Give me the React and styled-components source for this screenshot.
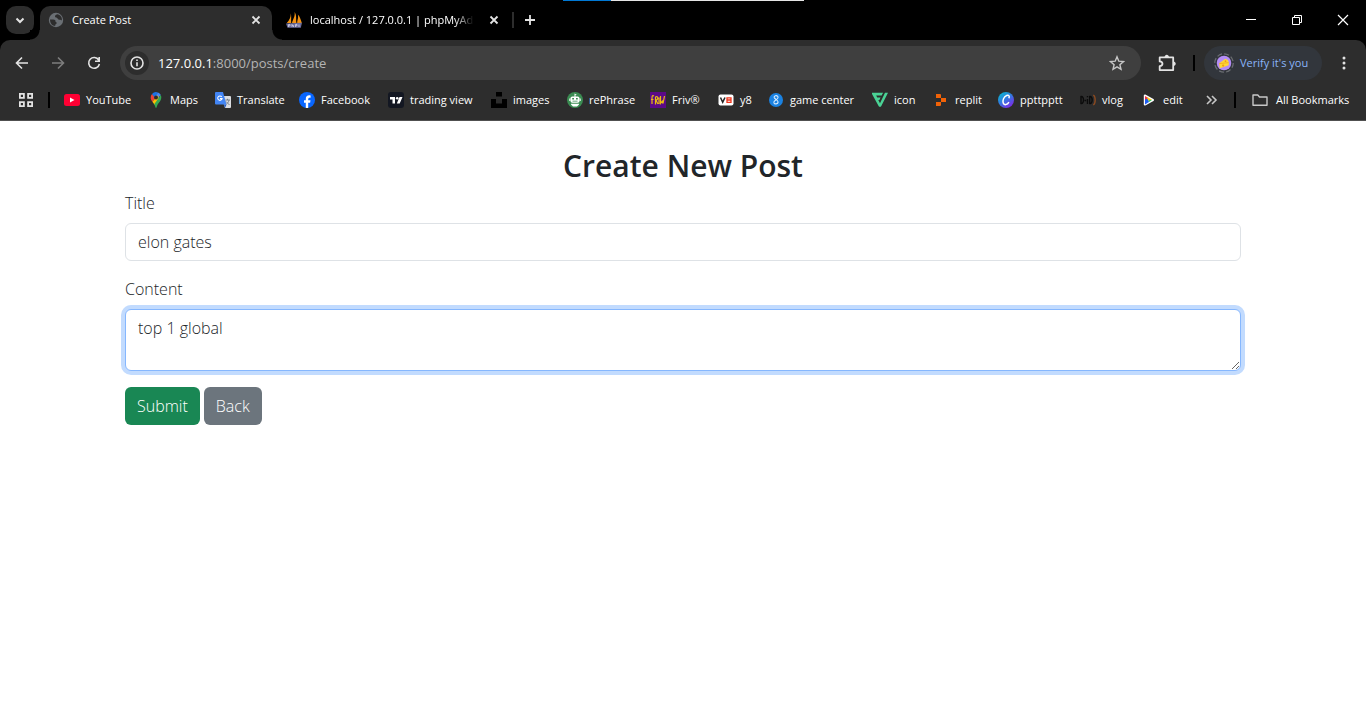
import React from "react";
import styled, { createGlobalStyle } from "styled-components";

const GlobalStyle = createGlobalStyle`
  *, *::before, *::after { box-sizing: border-box; }
  body {
    margin: 0;
    background: #fff;
    color: #212529;
    font: 300 16px/24px "Open Sans", "Noto Sans", sans-serif;
  }
  button, input, textarea { font: inherit; }
`;

/* ---------- browser window ---------- */

const Header = styled.header`
  position: relative;
  background: #000;
  color: #fff;
  font-size: 11px;
  line-height: 16px;
  font-weight: 400;
`;

const LoadingBar = styled.div`
  position: absolute;
  top: 0;
  left: 563px;
  width: 241px;
  height: 1px;
  background: linear-gradient(90deg, #0078d4 48px, #e5e5e5 48px);
`;

const TabStrip = styled.div`
  display: flex;
  align-items: center;
  height: 40px;
  padding-left: 6px;
`;

const PlainButton = styled.button`
  display: flex;
  align-items: center;
  justify-content: center;
  flex: none;
  padding: 0;
  border: 0;
  background: none;
  color: ${(p) => p.$color || "#e3e3e3"};
  width: ${(p) => p.$width || 24}px;
  height: ${(p) => p.$height || 24}px;
`;

const TabSearch = styled(PlainButton)`
  border-radius: 10px;
  background: #2d2d2d;
`;

const Tab = styled.div`
  position: relative;
  display: flex;
  align-items: center;
  align-self: flex-end;
  gap: 8px;
  height: 34px;
  width: ${(p) => p.$width}px;
  margin-left: ${(p) => (p.$active ? 6 : 0)}px;
  padding: 0 4px 6px ${(p) => (p.$active ? 8 : 14)}px;
  border-radius: 10px 10px 0 0;
  background: ${(p) => (p.$active ? "#2d2d2d" : "none")};

  &::before, &::after {
    content: "";
    display: ${(p) => (p.$active ? "block" : "none")};
    position: absolute;
    bottom: 0;
    width: 10px;
    height: 10px;
  }
  &::before {
    left: -10px;
    background: radial-gradient(circle at 0 0, #000 9px, #2d2d2d 10px);
  }
  &::after {
    right: -10px;
    background: radial-gradient(circle at 100% 0, #000 9px, #2d2d2d 10px);
  }
`;

const TabTitle = styled.span`
  flex: 1;
  overflow: hidden;
  white-space: nowrap;
  mask-image: ${(p) => (p.$fade ? "linear-gradient(90deg, #000 88%, transparent)" : "none")};
`;

const TabDivider = styled.span`
  width: 2px;
  height: 16px;
  margin: 0 4px 0 2px;
  background: #2d2d2d;
`;

const WindowControls = styled.div`
  display: flex;
  margin-left: auto;
`;

const Panel = styled.div`
  background: #2d2d2d;
  border-radius: 10px 10px 0 0;
  border-bottom: 1px solid #505050;
`;

const Toolbar = styled.div`
  display: flex;
  align-items: center;
  padding: 6px 10px 0;
`;

const NavButtons = styled.div`
  display: flex;
  gap: 12px;
  margin-right: 14px;
`;

const AddressBar = styled.form`
  display: flex;
  align-items: center;
  flex: 1;
  height: 34px;
  padding: 0 12px 0 5px;
  border-radius: 17px;
  background: #3f3f3f;
  font-size: 13px;
`;

const SiteInfo = styled(PlainButton)`
  border-radius: 12px;
  background: #2d2d2d;
  margin-right: 9px;
`;

const AddressInput = styled.input`
  flex: 1;
  min-width: 0;
  padding: 0;
  border: 0;
  outline: 0;
  background: none;
  color: #b4b4b4;
`;

const ProfileButton = styled.button`
  display: flex;
  align-items: center;
  gap: 6px;
  height: 34px;
  width: 118px;
  margin: 0 10px 0 9px;
  padding: 0 0 0 10px;
  border: 0;
  border-radius: 17px;
  background: #32363c;
  color: #8ab4f8;
  white-space: nowrap;
`;

const Divider = styled.span`
  flex: none;
  width: 2px;
  height: 16px;
  background: #000;
`;

const BookmarkBar = styled.nav`
  display: flex;
  align-items: center;
  height: 40px;
  padding: 0 14px;
`;

const AppsButton = styled(PlainButton)`
  margin-right: 10px;
`;

const BookmarkList = styled.div`
  display: flex;
  flex: 1;
  min-width: 0;
  overflow: hidden;
  padding-left: 14px;
`;

const Bookmark = styled.a`
  display: flex;
  align-items: center;
  flex: none;
  gap: 6px;
  width: ${(p) => p.$width}px;
  color: #fff;
  text-decoration: none;
  white-space: nowrap;
`;

const AllBookmarks = styled(Bookmark)`
  gap: 8px;
  margin-left: 16px;
`;

/* ---------- page ---------- */

const Container = styled.main`
  max-width: 1140px;
  margin: 0 auto;
  padding: 24px 12px;
`;

const Heading = styled.h1`
  margin: 0 0 4px;
  font-size: 30px;
  line-height: 42px;
  font-weight: 600;
  text-align: center;
`;

const Field = styled.div`
  margin-bottom: 16px;
`;

const Label = styled.label`
  display: block;
  margin-bottom: 8px;
`;

const TextInput = styled.input`
  display: block;
  width: 100%;
  height: 38px;
  padding: 6px 12px;
  border: 1px solid #dee2e6;
  border-radius: 6px;
  background: #fff;
  color: #212529;
  outline: 0;
`;

const TextArea = styled(TextInput)`
  height: 62px;
  resize: vertical;
  border-color: #86b7fe;
  box-shadow: 0 0 0 4px #c2dbfe;
`;

const Actions = styled.div`
  display: flex;
  gap: 4px;
`;

const Action = styled.button`
  height: 38px;
  padding: 6px 12px;
  border: 0;
  border-radius: 6px;
  background: ${(p) => p.$color};
  color: #fff;
  line-height: 26px;
  text-decoration: none;
`;

/* ---------- icons ---------- */

const Svg = styled.svg`
  flex: none;
`;

const Icon = ({ size = 16, children, ...rest }) => (
  <Svg width={size} height={size} viewBox="0 0 16 16" fill="none" stroke="currentColor" strokeWidth="1.6" aria-hidden="true" {...rest}>
    {children}
  </Svg>
);

const Chevron = () => <Icon><path d="M4.5 6.5 8 10l3.500-3.500" strokeWidth="2" /></Icon>;
const Close = () => <Icon><path d="m4.500 4.500 7 7m0-7-7 7" strokeWidth="1.800" /></Icon>;
const Plus = () => <Icon><path d="M8 3v10M3 8h10" strokeWidth="1.800" /></Icon>;
const Back = () => <Icon><path d="M14 8H3M8 2.500 2.500 8 8 13.500" /></Icon>;
const Forward = () => <Icon><path d="M2 8h11M8 2.500 13.500 8 8 13.500" /></Icon>;
const Reload = () => <Icon><path d="M12.700 5A5.400 5.400 0 1 0 13.400 9M13.200 2v4.300H9" /></Icon>;
const Info = () => <Icon><circle cx="8" cy="8" r="6" /><path d="M8 7.200v4M8 4.500v1.600" /></Icon>;
const Star = () => <Icon strokeWidth="1.400"><path d="m8 1.800 1.800 4.400 4.700.4-3.600 3.100 1.100 4.600L8 11.800l-4 2.500 1.100-4.600-3.600-3.100 4.700-.4z" /></Icon>;
const Puzzle = () => (
  <Icon size={18}>
    <path d="M1.500 3h12v11.300h-12v-3.500c3.300-.2 3.300-4 0-4.200z" strokeLinejoin="round" />
    <path d="M5.800 3c0-3 4-3 4 0zM13.500 6.600c3 0 3 4 0 4z" fill="currentColor" stroke="none" />
  </Icon>
);
const Dots = () => <Icon fill="currentColor" stroke="none"><circle cx="8" cy="3" r="1.500" /><circle cx="8" cy="8" r="1.500" /><circle cx="8" cy="13" r="1.500" /></Icon>;
const Apps = () => <Icon strokeWidth="1.800"><path d="M1.900 1.900h4v4h-4zM10.100 1.900h4v4h-4zM1.900 10.100h4v4h-4zM10.100 10.100h4v4h-4z" /></Icon>;
const More = () => <Icon><path d="m3 4 4 4-4 4M8 4l4 4-4 4" /></Icon>;
const Folder = () => <Icon stroke="#c7c7c7"><path d="M1 3h4.800l1.700 2H15v8.200H1z" strokeLinejoin="round" strokeWidth="1.400" /></Icon>;
const Minimize = () => <Icon><path d="M3 7.500h10" stroke="#fff" strokeWidth="1" /></Icon>;
const Restore = () => <Icon stroke="#fff" strokeWidth="1"><path d="M3.500 5.500h7v7h-7zM5.500 5.500v-2h7v7h-2" /></Icon>;
const WindowClose = () => <Icon stroke="#fff" strokeWidth="1.200"><path d="m3 3 10 10M13 3 3 13" /></Icon>;

const Globe = () => (
  <Icon stroke="none">
    <circle cx="8" cy="8" r="7.200" fill="#6a6f74" />
    <path d="M2 7.600h3.200c1.800 0 2.300.7 2.300 1.900 0 .8 1.300.6 1.300 1.400 0 1-1.600.8-1.600 2.300v.9C4.200 14 2.100 11.600 2 7.600zM9.200 2.300C7.600 2.800 7 3.600 7 4.600c0 1.300 2 .8 2.600 1.800.6 1.100 1.300 1.300 2.300 1.300.9 0 1.200.7 2 .5.300-2.900-1.600-5.500-4.700-5.900z" fill="#2d2d2d" />
  </Icon>
);
const PhpMyAdmin = () => (
  <Icon stroke="none">
    <path d="M4.600 1.300C5.200 5 3.500 8 .8 11h4.400C4.800 7.500 5.800 4.500 4.600 1.300zM8.500 0c1 4-1.500 7-2.500 11h4.500c-.8-3.500.5-8-2-11zM11.800 2.500c1 3.500-.8 5.500-.6 8.500h4.600c-.9-3-1.800-6.500-4-8.500z" fill="#f29111" />
    <path d="m0 11.400 16-.6-1.200 4.900H1.500z" fill="#6c6d9c" />
    <path d="M2.500 15v-2.500h1.500v1.300H2.500M6 12v3m0-1.500h1.500V15M9.500 15v-2.500H11v1.300H9.500M13 12.500V15" stroke="#cfcfe4" strokeWidth=".8" />
  </Icon>
);
const Cheese = () => (
  <Icon size={20} stroke="none">
    <circle cx="8" cy="8" r="7.400" stroke="#6a6d72" strokeDasharray="4 1.800" strokeWidth="1" />
    <circle cx="8" cy="8" r="5.800" fill="#b58cf5" />
    <path d="M4.200 8.200 8.800 4.800c1.800 0 3 1.200 3 3v2l-7.200 2.400z" fill="#fdd835" />
    <path d="m4.200 8.500 7.500-.8" stroke="#f4a91f" strokeWidth=".7" />
    <circle cx="7.300" cy="10" r=".9" fill="#ef9b16" /><circle cx="9.200" cy="6.500" r=".7" fill="#ef9b16" />
  </Icon>
);

const YouTube = () => <Icon stroke="none"><rect y="2" width="16" height="12" rx="2.500" fill="#ff0033" /><path d="M6 5.500v5L10.500 8z" fill="#fff" /></Icon>;
const Maps = () => (
  <Icon stroke="none">
    <path d="M2.700 5.700A5.300 5.300 0 0 1 4 2l4 3.300L4.400 9.800c-1-1.400-1.700-2.700-1.700-4.100z" fill="#ea4335" />
    <path d="M4 2a5.400 5.400 0 0 1 6-1.500L6.200 5z" fill="#1a73e8" />
    <path d="M10 .5a5.300 5.300 0 0 1 2.800 2.500L8 8.500 6 5z" fill="#4285f4" />
    <path d="M4.400 9.800 10 3l1 4-4.200 6z" fill="#fbbc04" />
    <path d="M12.800 3c1.200 3 0 5.300-1.500 7.200C9.800 12 9 13.500 8.500 15.500c-.2.600-.8.600-1 0-.4-1.500-.8-2.300-1.300-3.200z" fill="#34a853" />
    <circle cx="8" cy="5.500" r="2" fill="#2d2d2d" />
  </Icon>
);
const Translate = () => (
  <Icon stroke="none">
    <path d="M6 4h9a1 1 0 0 1 1 1v10a1 1 0 0 1-1 1H10z" fill="#dadce0" />
    <path d="M1 0h7l3.500 12.500H1a1 1 0 0 1-1-1V1a1 1 0 0 1 1-1z" fill="#4285f4" />
    <path d="M9 12.500h2.500L10 16z" fill="#1a56c4" />
    <path d="M6.700 4.800a2.200 2.200 0 1 0 .4 1.800H5" stroke="#fff" strokeWidth="1.100" />
    <path d="M10.500 8h4.500M12.500 6.800V8M14 8c-.3 2-1.500 3.300-2.500 4M11 9.500l3.500 3.500" stroke="#6f7985" strokeWidth=".9" />
  </Icon>
);
const Facebook = () => <Icon stroke="none"><circle cx="8" cy="8" r="8" fill="#0866ff" /><path d="M6.800 16v-5.300H5V8.200h1.800V7c0-2.600 1.200-3.700 3.500-3.700.5 0 1 .1 1.300.2v2.200h-.9c-1.100 0-1.500.5-1.500 1.600v.9h2.300l-.4 2.500H9.200V16z" fill="#fff" /></Icon>;
const TradingView = () => <Icon stroke="none"><rect width="16" height="16" rx="3" fill="#131722" /><path d="M2 5h5v6.500H4.500v-4H2zM11.500 5h3l-2.800 6.500H8.800z" fill="#fff" /><circle cx="9.200" cy="6.300" r="1.300" fill="#fff" /></Icon>;
const Unsplash = () => <Icon stroke="none"><path d="M5 0h6v4.500H5zM0 7h5v4.500h6V7h5v9H0z" fill="#000" /></Icon>;
const Robot = () => (
  <Icon stroke="none">
    <circle cx="8" cy="8" r="8" fill="#3b8c52" />
    <path d="M7.500 1.500 10 3H8.500v1.500h2.300A1.700 1.700 0 0 1 12.500 6v3a1.700 1.700 0 0 1-1.700 1.700H5.200A1.700 1.700 0 0 1 3.500 9V6a1.700 1.700 0 0 1 1.700-1.500h2.300zM2.300 6.500h.9v2.500h-.9zM12.800 6.500h.9v2.500h-.9zM4 11.700h8v.9l-2 2H6l-2-2z" fill="#fff" />
    <path d="M5.200 6h1.800v1.500H5.200zM9 6h1.800v1.500H9zM5.500 8.700h5v.8h-5z" fill="#3b8c52" />
  </Icon>
);
const Friv = () => <Icon stroke="none"><path d="M0 0h16v16H0z" fill="#5b0a87" /><path d="M4 4c-1.600-1-2 0-2 2v6M1 7.500h2.500M5.500 12.500V5c3-1.500 3 3 .3 3L8 12M9 5.500V12M10.500 4v7.500L12.300 9l.7 2.500L14.500 4" stroke="#e9bd12" strokeWidth="1.200" /></Icon>;
const Y8 = () => <Icon stroke="none"><rect x=".5" y="2.500" width="15" height="11" rx="2" fill="#fff" /><path d="m2.500 5.500 2.200 4.700 2.300-4.700" stroke="#222" strokeWidth="1.500" /><path d="M9 5.800h4v4.500H9zM9 8h4" stroke="#f0331b" strokeWidth="1.300" /></Icon>;
const GameCenter = () => <Icon stroke="none"><circle cx="8" cy="8" r="7" fill="#1a82e2" /><path d="M9.700 4.300C8.400 3 5.800 3.800 6.200 5.500c.4 1.500 4 2.600 3.900 4.600-.1 2-3.500 2.500-4.200.6-.6-2.200 3.900-3.200 4.100-4.900 0-.6 0-1-.3-1.500z" stroke="#d8ecff" strokeWidth="1.100" /></Icon>;
const Flaticon = () => <Icon stroke="none"><path d="M0 .8h11.200L9.800 3.500H4.200l1 1.900h3.500L7.500 8H6.300l1.700 3.200L13 .8h3L9.300 14a1.500 1.500 0 0 1-2.700 0L0 2z" fill="#4ad295" /><path d="m11.700.8-4 8" stroke="#2d2d2d" strokeWidth=".8" /></Icon>;
const Replit = () => <Icon stroke="none"><path d="M3 2h4a1 1 0 0 1 1 1v3H3zM8 6h5v4H8zM3 10h5v3a1 1 0 0 1-1 1H3z" fill="#f26207" /></Icon>;
const Canva = () => (
  <Icon stroke="none">
    <defs><linearGradient id="canva" x1="0" y1="0" x2=".7" y2="1"><stop stopColor="#00c4cc" /><stop offset=".5" stopColor="#2f7de0" /><stop offset="1" stopColor="#7d2ae8" /></linearGradient></defs>
    <circle cx="8" cy="8" r="8" fill="url(#canva)" />
    <path d="M10.700 6.300C12.200 4.300 10.700 2.700 8.700 3.500 5.700 4.700 4.400 8.600 5.200 11c.9 2.700 4.200 1.800 5.700-.9" stroke="#fff" strokeWidth="1.500" />
  </Icon>
);
const Vlog = () => <Icon strokeWidth="1.400"><path d="M1 4.500v7c3.300.5 3.300-7.500 0-7zM4.500 8.500h1.700M7.500 7v5M7.500 4v1.300M9.700 4.500v7c3.300.5 3.300-7.500 0-7z" stroke="#0b0b0b" /><path d="M13.300 3c2.500 1.500 2.500 8.500 0 10" stroke="#8c4a20" /></Icon>;
const Edit = () => (
  <Icon stroke="none">
    <path d="M3.800 3.500v9L12 8z" fill="#fff" stroke="#fff" strokeLinejoin="round" strokeWidth="2" />
    <path d="M4 4v5l3.500-3z" fill="#ef2f4b" /><path d="M4 7.500v5L8 10 7 6.500z" fill="#1e5df2" /><path d="M7 6.500 8 10l3-2z" fill="#24c35b" /><path d="m5.500 4.700 5.500 3.100-3.700.7z" fill="#ffca1c" />
  </Icon>
);

const bookmarks = [
  ["YouTube", YouTube, 84],
  ["Maps", Maps, 67],
  ["Translate", Translate, 84],
  ["Facebook", Facebook, 89],
  ["trading view", TradingView, 103],
  ["images", Unsplash, 76],
  ["rePhrase", Robot, 83],
  ["Friv®", Friv, 68],
  ["y8", Y8, 50],
  ["game center", GameCenter, 104],
  ["icon", Flaticon, 61],
  ["replit", Replit, 65],
  ["ppttpptt", Canva, 82],
  ["vlog", Vlog, 61],
  ["edit", Edit, 48],
];

function BrowserHeader() {
  return (
    <Header>
      <LoadingBar />
      <TabStrip>
        <TabSearch $width={28} $height={28} aria-label="Search tabs"><Chevron /></TabSearch>
        <Tab $active $width={232}>
          <Globe />
          <TabTitle>Create Post</TabTitle>
          <PlainButton aria-label="Close tab"><Close /></PlainButton>
        </Tab>
        <Tab $width={238}>
          <PhpMyAdmin />
          <TabTitle $fade>localhost / 127.0.0.1 | phpMyAd</TabTitle>
          <PlainButton aria-label="Close tab"><Close /></PlainButton>
        </Tab>
        <TabDivider />
        <PlainButton aria-label="New tab"><Plus /></PlainButton>
        <WindowControls>
          <PlainButton $width={46} $height={40} aria-label="Minimize"><Minimize /></PlainButton>
          <PlainButton $width={46} $height={40} aria-label="Restore"><Restore /></PlainButton>
          <PlainButton $width={46} $height={40} aria-label="Close window"><WindowClose /></PlainButton>
        </WindowControls>
      </TabStrip>
      <Panel>
        <Toolbar>
          <NavButtons>
            <PlainButton aria-label="Back"><Back /></PlainButton>
            <PlainButton $color="#7d7d7d" aria-label="Forward"><Forward /></PlainButton>
            <PlainButton aria-label="Reload"><Reload /></PlainButton>
          </NavButtons>
          <AddressBar onSubmit={(e) => e.preventDefault()}>
            <SiteInfo type="button" aria-label="Site information"><Info /></SiteInfo>
            <label htmlFor="address">127.0.0.1</label>
            <AddressInput id="address" defaultValue=":8000/posts/create" />
            <PlainButton type="button" $color="#c7c7c7" aria-label="Bookmark this page"><Star /></PlainButton>
          </AddressBar>
          <PlainButton $width={52} aria-label="Extensions"><Puzzle /></PlainButton>
          <Divider />
          <ProfileButton><Cheese />Verify it's you</ProfileButton>
          <PlainButton aria-label="Menu"><Dots /></PlainButton>
        </Toolbar>
        <BookmarkBar aria-label="Bookmarks">
          <AppsButton aria-label="Apps"><Apps /></AppsButton>
          <Divider />
          <BookmarkList>
            {bookmarks.map(([name, Favicon, width]) => (
              <Bookmark key={name} href="#" $width={width}><Favicon />{name}</Bookmark>
            ))}
          </BookmarkList>
          <PlainButton $width={44} $color="#c7c7c7" aria-label="More bookmarks"><More /></PlainButton>
          <Divider />
          <AllBookmarks href="#" $width={100}><Folder />All Bookmarks</AllBookmarks>
        </BookmarkBar>
      </Panel>
    </Header>
  );
}

export default function App() {
  return (
    <>
      <GlobalStyle />
      <BrowserHeader />
      <Container>
        <Heading>Create New Post</Heading>
        <form onSubmit={(e) => e.preventDefault()}>
          <Field>
            <Label htmlFor="title">Title</Label>
            <TextInput id="title" defaultValue="elon gates" />
          </Field>
          <Field>
            <Label htmlFor="content">Content</Label>
            <TextArea as="textarea" id="content" defaultValue="top 1 global" />
          </Field>
          <Actions>
            <Action type="submit" $color="#198754">Submit</Action>
            <Action as="a" href="#" $color="#6c757d">Back</Action>
          </Actions>
        </form>
      </Container>
    </>
  );
}
